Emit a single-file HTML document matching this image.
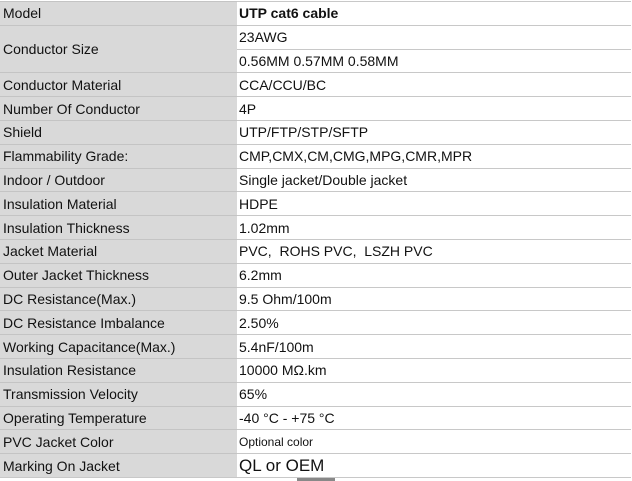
<!DOCTYPE html><html><head><style>
body{margin:0;width:632px;height:481px;background:#fff;position:relative;overflow:hidden;font-family:"Liberation Sans",Arial,sans-serif;font-size:14px;color:#111}
.l,.r{position:absolute;box-sizing:border-box;border-top:1px solid #c8c8c8;display:flex;align-items:center;white-space:nowrap}
.l{left:0;width:237px;background:#d9d9d9;padding-left:3px;border-top-color:#c4c4c4}
.r{left:237px;width:394px;padding-left:2px;background:#fff}
.bot{position:absolute;top:477px;left:0;width:631px;border-top:1px solid #c8c8c8}
</style></head><body>
<div id="t"></div>
<script>
var L=["Model","Conductor Size",null,"Conductor Material","Number Of Conductor","Shield","Flammability Grade:","Indoor / Outdoor","Insulation Material","Insulation Thickness","Jacket Material","Outer Jacket Thickness","DC Resistance(Max.)","DC Resistance Imbalance","Working Capacitance(Max.)","Insulation Resistance","Transmission Velocity","Operating Temperature","PVC Jacket Color","Marking On Jacket"];
var R=["<b>UTP cat6 cable</b>","23AWG","0.56MM 0.57MM 0.58MM","CCA/CCU/BC","4P","UTP/FTP/STP/SFTP","CMP,CMX,CM,CMG,MPG,CMR,MPR","Single jacket/Double jacket","HDPE","1.02mm","PVC,&nbsp; ROHS PVC,&nbsp; LSZH PVC","6.2mm","9.5 Ohm/100m","2.50%","5.4nF/100m","10000 M&Omega;.km","65%","-40 °C - +75 °C","<span style='font-size:12px'>Optional color</span>","<span style='font-size:17px'>QL or OEM</span>"];
var h="",H=23.8;
for(var i=0;i<20;i++){var y=1+i*H;
if(L[i]!==null){var hh=(i==1?2*H:H);h+="<div class='l' style='top:"+y+"px;height:"+hh+"px'>"+L[i]+"</div>";}
h+="<div class='r' style='top:"+y+"px;height:"+H+"px'>"+R[i]+"</div>";}
h+="<div class='bot'></div><div style='position:absolute;left:297px;top:478px;width:38px;height:3px;background:#888'></div>";
document.getElementById('t').innerHTML=h;
</script>
</body></html>
